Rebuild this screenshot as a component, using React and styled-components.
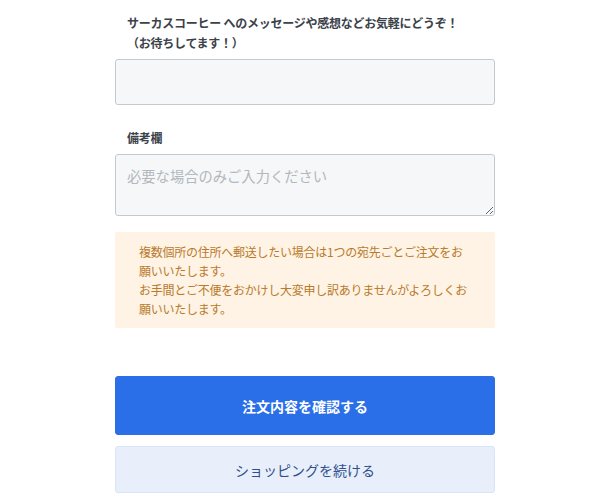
import React from "react";
import styled, { createGlobalStyle } from "styled-components";

const Global = createGlobalStyle`
  html, body { margin: 0; padding: 0; background: #fff; }
  body { font-family: "Noto Sans CJK JP", "Noto Sans", sans-serif; }
`;

const Page = styled.div`
  width: 380px;
  margin: 0 0 0 115px;
  padding: 13px 0 0 0;
  display: flex;
  flex-direction: column;
`;

const Field = styled.div`
  display: flex;
  flex-direction: column;
  gap: 6px;
  margin-bottom: ${(p) => p.$mb || 0}px;
`;

const Label = styled.label`
  padding-left: 12px;
  font-size: 12px;
  line-height: 20px;
  font-weight: 700;
  letter-spacing: -0.25px;
  color: #3b424a;
`;

const Area = styled.textarea`
  box-sizing: border-box;
  width: 100%;
  height: ${(p) => p.$h}px;
  margin: 0;
  padding: 10px 11px;
  border: 1px solid #c3cacf;
  border-radius: 3px;
  background: #f5f7f8;
  font-family: "Noto Sans CJK JP", sans-serif;
  font-size: 14.3px;
  line-height: 22px;
  color: #333;
  resize: ${(p) => (p.$resize ? "vertical" : "none")};
  outline: none;
  &::placeholder { color: #b2b8bd; }
`;

const Notice = styled.div`
  box-sizing: border-box;
  margin-top: 16px;
  padding: 10px 24px;
  background: #fef3e4;
  border-radius: 2px;
  color: #b97a2c;
  font-size: 12px;
  line-height: 19px;
  letter-spacing: -0.25px;
`;

const Button = styled.button`
  box-sizing: border-box;
  width: 100%;
  height: ${(p) => p.$h}px;
  margin: ${(p) => p.$mt}px 0 0 0;
  border-radius: 3px;
  font-family: "Noto Sans CJK JP", sans-serif;
  font-size: 14px;
  font-weight: ${(p) => (p.$primary ? 700 : 400)};
  background: ${(p) => (p.$primary ? "#2a6fe8" : "#e8effb")};
  color: ${(p) => (p.$primary ? "#ffffff" : "#2f4f8c")};
  border: 1px solid ${(p) => (p.$primary ? "#2a6fe8" : "#d9e4f6")};
  cursor: pointer;
`;

export default function App() {
  return (
    <>
      <Global />
      <Page>
        <Field $mb={23}>
          <Label>
            サーカスコーヒー へのメッセージや感想などお気軽にどうぞ！
            <br />
            （お待ちしてます！）
          </Label>
          <Area $h={46} />
        </Field>
        <Field>
          <Label>備考欄</Label>
          <Area $h={62} $resize placeholder="必要な場合のみご入力ください" />
        </Field>
        <Notice>
          複数個所の住所へ郵送したい場合は1つの宛先ごとご注文をお願いいたします。
          <br />
          お手間とご不便をおかけし大変申し訳ありませんがよろしくお願いいたします。
        </Notice>
        <Button $primary $h={59} $mt={48}>注文内容を確認する</Button>
        <Button $h={47} $mt={11}>ショッピングを続ける</Button>
      </Page>
    </>
  );
}
